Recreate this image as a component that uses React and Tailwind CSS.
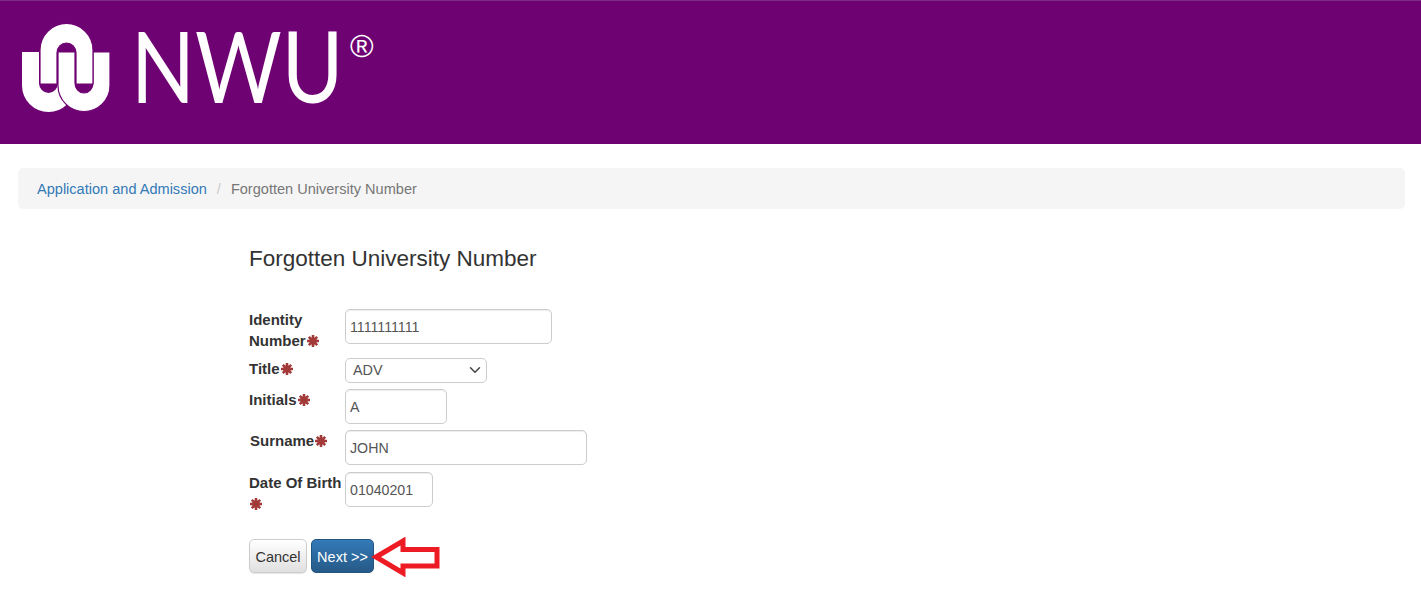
import React from 'react';
import { ChevronDown } from 'lucide-react';

// Required-field marker
const Req = () => (
  <svg viewBox="0 0 14 14" className="inline-block w-[14px] h-[14px] align-[-2px]" fill="none" stroke="#a33a3a" strokeWidth="2.6">
    <path d="M7 1v12M1 7h12M2.8 2.8l8.4 8.4M11.2 2.8l-8.4 8.4" />
    <circle cx="7" cy="7" r="3.6" fill="#a33a3a" stroke="none" />
  </svg>
);

const Logo = () => (
  <div className="flex items-start">
    <svg viewBox="0 0 92 92" className="w-[92px] h-[92px] mt-[22px] ml-[20px] shrink-0" fill="#fff" stroke="#6f0273" strokeWidth="1.2">
      {/* left U */}
      <path d="M2 29V62.5A26.5 26.5 0 0 0 55 62.5V40H38V60A9.5 10 0 0 1 19 60V29Z" stroke="none" />
      {/* right U */}
      <path d="M38 29V62.5A26 26 0 0 0 90 62.5V29H73V60A9 10 0 0 1 55 60V29Z" />
      {/* arch */}
      <path d="M20 61V27A26.5 26.5 0 0 1 73 27V61H56V30A9.5 10 0 0 0 37 30V61Z" />
    </svg>
    <span className="ml-[19px] mt-[15px] w-[197px] shrink-0 whitespace-nowrap origin-left scale-x-[0.855] text-[98px] leading-[98px] font-normal text-white font-['Lato',sans-serif]">NWU</span>
    <span className="ml-[22px] mt-[26px] text-[32px] leading-[38px] text-white font-['Liberation_Sans',sans-serif]">®</span>
  </div>
);

const Row = ({ label, mb, labelClass = '', children }) => (
  <div className={`flex ${mb}`}>
    <label className={`w-[96px] shrink-0 text-[15px] font-bold leading-[21px] text-[#333] ${labelClass}`}>
      {label}
      <Req />
    </label>
    {children}
  </div>
);

const inputClass = 'block h-[35px] border border-[#ccc] rounded-[5px] px-[4px] text-[14.2px] text-[#555] bg-white shadow-[inset_0_1px_1px_rgba(0,0,0,0.075)] outline-none';

export default function App() {
  return (
    <div className="min-h-[605px] bg-white font-['Liberation_Sans',Arial,sans-serif] text-[14.5px] text-[#333]">
      <header className="h-[144px] bg-[#6f0273] border-t border-[#7f2a83]">
        <Logo />
      </header>

      <nav className="ml-[18px] mr-[16px] mt-[24px] h-[41px] bg-[#f5f5f5] rounded-[5px] px-[19px] pt-[2px] flex items-center text-[14.55px]">
        <a href="#" className="text-[#337ab7]">Application and Admission</a>
        <span className="text-[#ccc] mx-[10px]">/</span>
        <span className="text-[#777]">Forgotten University Number</span>
      </nav>

      <main className="ml-[249px] relative w-[500px]">
        <h1 className="mt-[36px] mb-[36px] text-[22.5px] leading-[28px] font-normal text-[#333]">Forgotten University Number</h1>

        <form>
          <Row label="Identity Number" mb="mb-[7px]">
            <input className={`${inputClass} w-[207px]`} defaultValue="1111111111" />
          </Row>
          <Row label="Title" mb="mb-[6px]">
            <div className="relative w-[142px]">
              <select className="block w-full h-[25px] appearance-none border border-[#ccc] rounded-[5px] pl-[7px] pt-px text-[14.4px] text-[#555] bg-white outline-none">
                <option>ADV</option>
              </select>
              <ChevronDown className="absolute right-[3px] top-[3px] w-[18px] h-[18px] text-[#444] pointer-events-none" strokeWidth={2} />
            </div>
          </Row>
          <Row label="Initials" mb="mb-[6px]">
            <input className={`${inputClass} w-[102px]`} defaultValue="A" />
          </Row>
          <Row label="Surname" mb="mb-[7px]" labelClass="pl-px">
            <input className={`${inputClass} w-[242px]`} defaultValue="JOHN" />
          </Row>
          <Row label="Date Of Birth" mb="mb-[25px]">
            <input className={`${inputClass} w-[88px]`} defaultValue="01040201" />
          </Row>

          <div className="flex gap-[4px] relative">
            <button type="button" className="w-[58px] h-[34px] pt-[3px] rounded-[5px] border border-[#ccc] bg-gradient-to-b from-white to-[#e0e0e0] text-[#333] shadow-[0_1px_1px_rgba(0,0,0,0.1)]">Cancel</button>
            <button type="button" className="w-[63px] h-[34px] pt-[3px] rounded-[5px] border border-[#245580] bg-gradient-to-b from-[#337ab7] to-[#265a88] text-white">Next &gt;&gt;</button>
            {/* red annotation arrow */}
            <svg className="absolute left-[118px] top-[-2px] w-[76px] h-[40px]" viewBox="0 0 76 40" fill="none">
              <path d="M9 20 L36 4 V12.5 H70 V29 H36 V36 Z" stroke="#ed1c24" strokeWidth="5" />
            </svg>
          </div>
        </form>
      </main>
    </div>
  );
}
